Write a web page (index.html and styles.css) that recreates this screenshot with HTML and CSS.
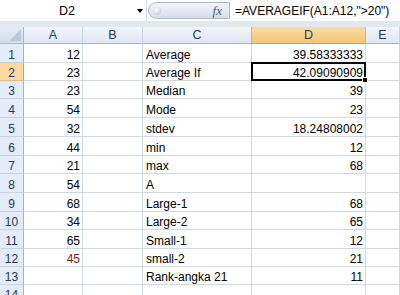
FILE: index.html
```html
<!DOCTYPE html>
<html lang="en">
<head>
    <meta charset="UTF-8">
    <title>AVERAGEIF</title>
    <link rel="stylesheet" href="styles.css">
</head>
<body>
    <div class="sheet">
        <div class="formula-bar">
            <div class="name-box">
                <span class="ref">D2</span>
                <span class="arrow"></span>
            </div>
            <div class="fx-pill">
                <span class="grip"></span>
                <span class="fx">fx</span>
            </div>
            <div class="formula">=AVERAGEIF(A1:A12,"&gt;20")</div>
        </div>
        <div class="band"></div>

        <div class="grid">
            <div class="corner"><span class="tri"></span></div>
            <div class="col-head">A</div>
            <div class="col-head">B</div>
            <div class="col-head">C</div>
            <div class="col-head active">D</div>
            <div class="col-head">E</div>

            <div class="row-head">1</div>
            <div class="cell num">12</div><div class="cell"></div><div class="cell">Average</div><div class="cell num">39.58333333</div><div class="cell"></div>

            <div class="row-head active">2</div>
            <div class="cell num">23</div><div class="cell"></div><div class="cell">Average If</div><div class="cell num selected">42.09090909<span class="handle"></span></div><div class="cell"></div>

            <div class="row-head">3</div>
            <div class="cell num">23</div><div class="cell"></div><div class="cell">Median</div><div class="cell num">39</div><div class="cell"></div>

            <div class="row-head">4</div>
            <div class="cell num">54</div><div class="cell"></div><div class="cell">Mode</div><div class="cell num">23</div><div class="cell"></div>

            <div class="row-head">5</div>
            <div class="cell num">32</div><div class="cell"></div><div class="cell">stdev</div><div class="cell num">18.24808002</div><div class="cell"></div>

            <div class="row-head">6</div>
            <div class="cell num">44</div><div class="cell"></div><div class="cell">min</div><div class="cell num">12</div><div class="cell"></div>

            <div class="row-head">7</div>
            <div class="cell num">21</div><div class="cell"></div><div class="cell">max</div><div class="cell num">68</div><div class="cell"></div>

            <div class="row-head">8</div>
            <div class="cell num">54</div><div class="cell"></div><div class="cell">A</div><div class="cell num"></div><div class="cell"></div>

            <div class="row-head">9</div>
            <div class="cell num">68</div><div class="cell"></div><div class="cell">Large-1</div><div class="cell num">68</div><div class="cell"></div>

            <div class="row-head">10</div>
            <div class="cell num">34</div><div class="cell"></div><div class="cell">Large-2</div><div class="cell num">65</div><div class="cell"></div>

            <div class="row-head">11</div>
            <div class="cell num">65</div><div class="cell"></div><div class="cell">Small-1</div><div class="cell num">12</div><div class="cell"></div>

            <div class="row-head">12</div>
            <div class="cell num red">45</div><div class="cell"></div><div class="cell">small-2</div><div class="cell num">21</div><div class="cell"></div>

            <div class="row-head">13</div>
            <div class="cell num"></div><div class="cell"></div><div class="cell">Rank-angka 21</div><div class="cell num">11</div><div class="cell"></div>

            <div class="row-head">14</div>
            <div class="cell"></div><div class="cell"></div><div class="cell"></div><div class="cell"></div><div class="cell"></div>
        </div>
    </div>
</body>
</html>
```

FILE: styles.css
```css
body {
    margin: 0;
    background-color: white;
    font-family: "Liberation Sans", Arial, sans-serif;
    font-size: 12px;
    color: black;
}

.sheet {
    width: 400px;
    height: 295px;
    overflow: hidden;
}

/* formula bar */
.formula-bar {
    display: flex;
    height: 21px;
    background-color: white;
}

.name-box {
    width: 146px;
    display: flex;
    align-items: center;
    border-right: 1px solid #d3dbe6;
}

.name-box .ref {
    width: 134px;
    text-align: center;
    font-size: 12.5px;
}

.name-box .arrow {
    margin-left: 3px;
    border-left: 3px solid transparent;
    border-right: 3px solid transparent;
    border-top: 4px solid black;
}

.fx-pill {
    width: 80px;
    margin: 2px 0 2px 1px;
    display: flex;
    align-items: center;
    border: 1px solid #a9bbd1;
    border-radius: 9px 0 0 9px;
    background: linear-gradient(#f1f5fa, #d5dfeb);
}

.fx-pill .grip {
    width: 8px;
    height: 8px;
    margin-left: 4px;
    border-radius: 50%;
    background: radial-gradient(circle at 40% 35%, #ffffff, #b4c2d3);
}

.fx-pill .fx {
    margin-left: auto;
    margin-right: 7px;
    font-family: "Liberation Serif", "Times New Roman", serif;
    font-style: italic;
    font-size: 13px;
    color: #4c5f79;
}

.formula {
    padding-left: 5px;
    display: flex;
    align-items: center;
    white-space: nowrap;
    font-size: 12px;
}

.band {
    height: 6px;
    background-color: #e2e8f0;
}

/* sheet grid */
.grid {
    display: grid;
    grid-template-columns: 24px 59px 60px 109px 114px 1fr;
    grid-template-rows: 17px 19px 18px 18px 19px 19px 19px 18px 19px 19px 18px 19px 18px 18px 18px;
}

.grid > div {
    box-sizing: border-box;
    white-space: nowrap;
    line-height: 14px;
}

.corner {
    position: relative;
    background: linear-gradient(#e3ebf5, #d2ddea);
    border-right: 1px solid #9eb6ce;
    border-bottom: 1px solid #9eb6ce;
}

.corner .tri {
    position: absolute;
    right: 2px;
    bottom: 2px;
    width: 0;
    height: 0;
    border-left: 12px solid transparent;
    border-bottom: 12px solid #b9c9dc;
}

.col-head {
    display: flex;
    align-items: center;
    justify-content: center;
    background: linear-gradient(#f2f5fa, #dfe7f1);
    border-right: 1px solid #c5d2e2;
    border-bottom: 1px solid #9eb6ce;
    color: #233a5c;
    font-size: 12.5px;
}

.col-head.active {
    background: linear-gradient(#fadca6, #f3c673);
    border-left: 1px solid #f2a95a;
    border-right: 1px solid #f2a95a;
    border-bottom: 1px solid #f29536;
    margin-left: -1px;
}

.row-head {
    display: flex;
    align-items: flex-end;
    justify-content: center;
    background-color: #e4ecf7;
    border-right: 1px solid #9eb6ce;
    border-bottom: 1px solid #c5d2e2;
    color: #233a5c;
}

.row-head.active {
    background-color: #f9d9a1;
    border-right: 1px solid #f29536;
    border-bottom: 1px solid #f2b66e;
}

.cell {
    display: flex;
    align-items: flex-end;
    padding: 0 2px 0 3px;
    border-right: 1px solid #d0d7e5;
    border-bottom: 1px solid #d0d7e5;
}

.cell.num {
    justify-content: flex-end;
}

.cell.red {
    color: #7a1f12;
}

.cell.selected {
    position: relative;
}

.cell.selected::after {
    content: "";
    position: absolute;
    top: -1px;
    left: -1px;
    right: -1px;
    bottom: -1px;
    border: 2px solid black;
}

.cell.selected .handle {
    position: absolute;
    right: -3px;
    bottom: -3px;
    width: 4px;
    height: 4px;
    background-color: black;
    border: 1px solid white;
    z-index: 1;
}
```
